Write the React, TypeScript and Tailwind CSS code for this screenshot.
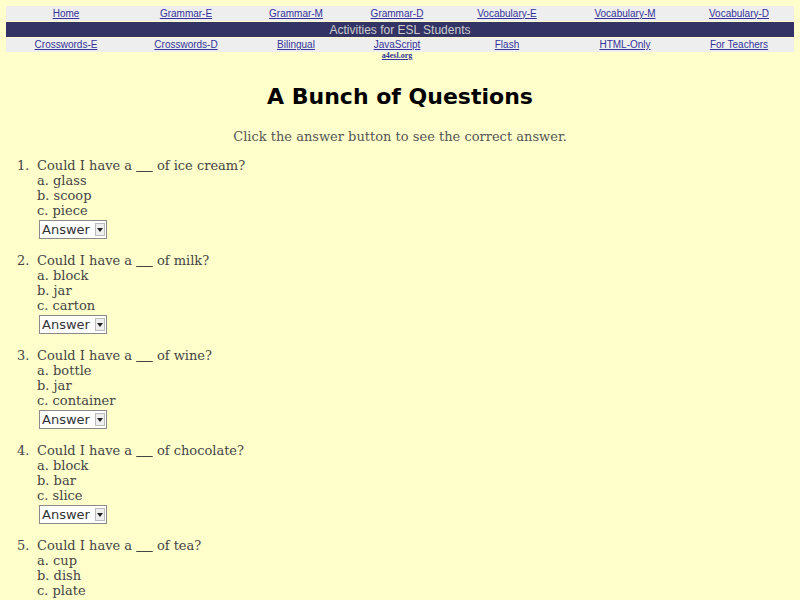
const topLinks = ['Home', 'Grammar-E', 'Grammar-M', 'Grammar-D', 'Vocabulary-E', 'Vocabulary-M', 'Vocabulary-D'];
const bottomLinks = ['Crosswords-E', 'Crosswords-D', 'Bilingual', 'JavaScript', 'Flash', 'HTML-Only', 'For Teachers'];

const questions = [
  { q: 'of ice cream?', options: ['glass', 'scoop', 'piece'] },
  { q: 'of milk?', options: ['block', 'jar', 'carton'] },
  { q: 'of wine?', options: ['bottle', 'jar', 'container'] },
  { q: 'of chocolate?', options: ['block', 'bar', 'slice'] },
  { q: 'of tea?', options: ['cup', 'dish', 'plate'] },
];

function AnswerSelect() {
  return (
    <div className="flex h-[19px] w-[68px] items-center border border-[#8a8a8a] bg-white pl-[2px] pr-[1px]">
      <span className="flex-1 text-[13px] leading-none text-[#333]" style={{ fontFamily: '"DejaVu Sans", sans-serif' }}>
        Answer
      </span>
      <span className="flex h-[13px] w-[10px] items-center justify-center border border-[#bbb] bg-[#eee]">
        <svg width="6" height="4" viewBox="0 0 6 4">
          <path d="M0 0h6L3 4z" fill="#222" />
        </svg>
      </span>
    </div>
  );
}

export default function App() {
  return (
    <div className="min-h-[600px] overflow-hidden bg-[#ffffcc] pt-[6px]" style={{ fontFamily: '"DejaVu Serif", serif' }}>
      {/* Nav table */}
      <div className="mx-[6px]" style={{ fontFamily: '"Liberation Sans", Arial, sans-serif' }}>
        <div className="grid h-[15px] grid-cols-[120px_120px_100px_102px_118px_118px_1fr] items-center bg-[#eeeeee]">
          {topLinks.map((l) => (
            <a key={l} className="text-center text-[10px] leading-none text-[#333399] underline">
              {l}
            </a>
          ))}
        </div>
        <div className="mt-[1px] flex h-[15px] items-center justify-center bg-[#333366] text-[12px] leading-none text-[#cccccc]">
          Activities for ESL Students
        </div>
        <div className="mt-[1px] grid h-[14px] grid-cols-[120px_120px_100px_102px_118px_118px_1fr] items-center bg-[#eeeeee]">
          {bottomLinks.map((l) => (
            <a key={l} className="relative text-center text-[10px] leading-none text-[#333399] underline">
              {l}
              {l === 'JavaScript' && (
                <span className="absolute left-0 right-0 top-[12px] text-center text-[8px] font-bold text-[#333399] underline" style={{ fontFamily: '"Liberation Serif", serif' }}>
                  a4esl.org
                </span>
              )}
            </a>
          ))}
        </div>
      </div>

      <h1 className="mt-[34px] text-center text-[22px] font-bold leading-none text-black" style={{ fontFamily: '"DejaVu Sans", sans-serif' }}>
        A Bunch of Questions
      </h1>
      <p className="mt-[22px] text-center text-[13px] leading-none text-[#555]">
        Click the answer button to see the correct answer.
      </p>

      <ol className="mt-[15px] pl-[17px] text-[13px] leading-[15px] text-[#444]">
        {questions.map((item, i) => (
          <li key={i} className="mb-[14px] flex">
            <span className="w-[20px]">{i + 1}.</span>
            <div>
              <div>
                Could I have a <span className="underline">&nbsp;&nbsp;&nbsp;&nbsp;</span> {item.q}
              </div>
              {item.options.map((o, j) => (
                <div key={o}>
                  {String.fromCharCode(97 + j)}. {o}
                </div>
              ))}
              <div className="mt-[2px] ml-[2px]">
                <AnswerSelect />
              </div>
            </div>
          </li>
        ))}
      </ol>
    </div>
  );
}
